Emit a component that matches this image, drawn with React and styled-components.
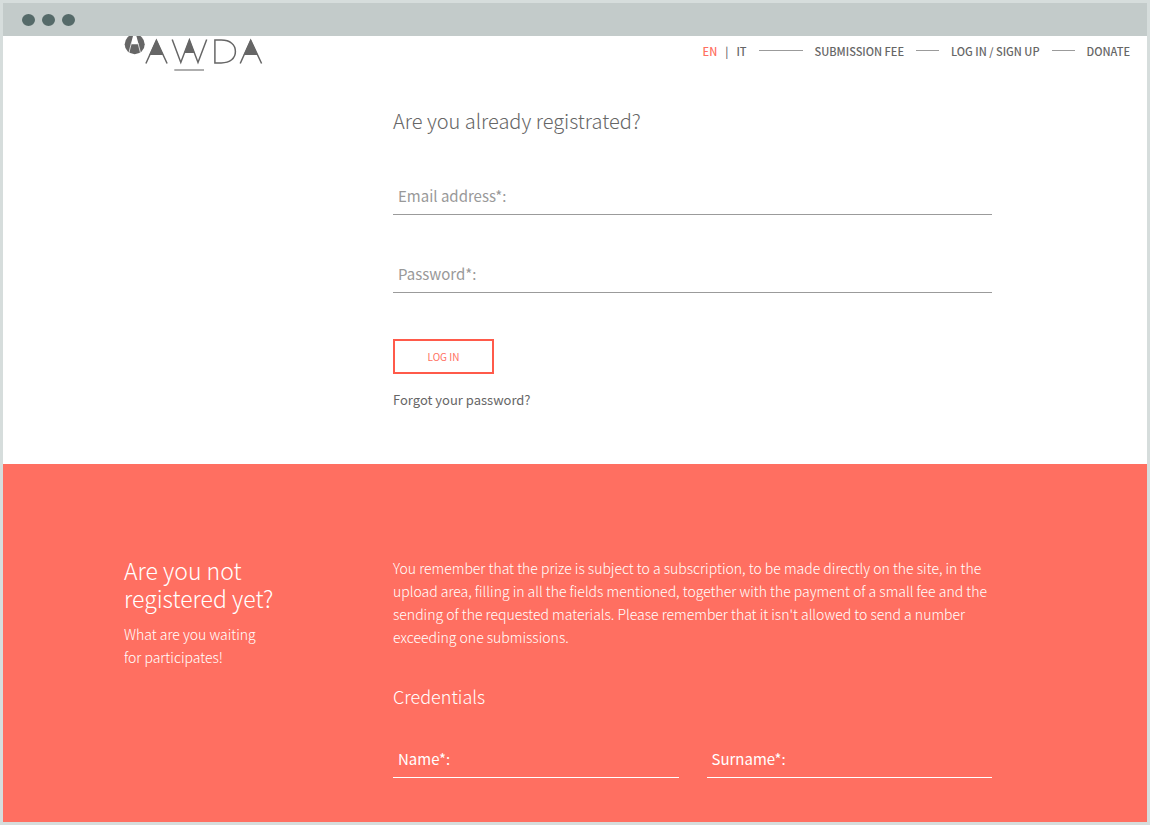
import styled, { createGlobalStyle } from "styled-components";

const Colors = {
    frame: "#d6dddc",
    toolbar: "#c3cbca",
    dot: "#556a69",
    coral: "#ff6f61",
    button: "#ff5a4a",
    text: "#666666",
    muted: "#999999",
    line: "#9b9b9b",
};

const App = () => {

    return (
        <>
            <GlobalStyle />
            <StyledWindow>
                <StyledToolbar>
                    <StyledDot />
                    <StyledDot />
                    <StyledDot />
                </StyledToolbar>
                <StyledHeader>
                    <Logo />
                    <StyledNav>
                        <StyledNavLink href="#en" $active>EN</StyledNavLink>
                        <StyledSeparator>|</StyledSeparator>
                        <StyledNavLink href="#it">IT</StyledNavLink>
                        <StyledDash $long />
                        <StyledNavLink href="#fee">SUBMISSION FEE</StyledNavLink>
                        <StyledDash />
                        <StyledNavLink href="#login">LOG IN / SIGN UP</StyledNavLink>
                        <StyledDash />
                        <StyledNavLink href="#donate">DONATE</StyledNavLink>
                    </StyledNav>
                </StyledHeader>
                <StyledLogin>
                    <StyledForm>
                        <StyledTitle>Are you already registrated?</StyledTitle>
                        <Field id="email" label="Email address*:" type="email" />
                        <Field id="password" label="Password*:" type="password" />
                        <StyledButton type="button">LOG IN</StyledButton>
                        <StyledForgot href="#forgot">Forgot your password?</StyledForgot>
                    </StyledForm>
                </StyledLogin>
                <StyledRegister>
                    <div>
                        <StyledRegisterTitle>Are you not<br />registered yet?</StyledRegisterTitle>
                        <StyledText>What are you waiting<br />for participates!</StyledText>
                    </div>
                    <div>
                        <StyledText>
                            You remember that the prize is subject to a subscription, to be made directly on the site, in the
                            upload area, filling in all the fields mentioned, together with the payment of a small fee and the
                            sending of the requested materials. Please remember that it isn't allowed to send a number
                            exceeding one submissions.
                        </StyledText>
                        <StyledSubtitle>Credentials</StyledSubtitle>
                        <StyledFieldRow>
                            <Field id="name" label="Name*:" type="text" light />
                            <Field id="surname" label="Surname*:" type="text" light />
                        </StyledFieldRow>
                    </div>
                </StyledRegister>
            </StyledWindow>
        </>
    )
}

export default App;

const Field = ({ id, label, type, light }) => (
    <StyledField $light={light}>
        <StyledLabel htmlFor={id} $light={light}>{label}</StyledLabel>
        <StyledInput id={id} type={type} />
    </StyledField>
)

const Logo = () => (
    <svg width="140" height="36" viewBox="124 36 140 36" role="img" aria-label="AWDA">
        <circle cx="134.7" cy="44.3" r="10" fill="#666" />
        <path d="M133 36h3.4l2.2 8.2h-7.8z" fill="#fff" />
        <path d="M131.4 43l-2.5 9.8M138 43l2.5 9.8" stroke="#ddd" strokeWidth="1" fill="none" />
        <g fill="none" stroke="#666" strokeWidth="1.5">
            <path d="M145.9 63.5l10.5-23.3 10.7 23.3" />
            <path d="M172.2 39.4l8.6 23 8.6-22.6 8.6 22.6 8.7-23" />
            <path d="M214.9 40.1h6.3c9 0 14.2 4.6 14.2 11.4s-5.2 11.4-14.2 11.4h-6.3z" />
            <path d="M240.2 63.5l10.5-23.3 10.9 23.3" />
        </g>
        <path d="M156.4 39.2l7 15.8h-14.1zM189.4 39l5.3 14h-10.6zM250.7 39.2l7.1 15.8h-14.2z" fill="#666" />
        <path d="M174.3 70h29.7" stroke="#777" strokeWidth="1.2" />
    </svg>
)

const GlobalStyle = createGlobalStyle`
    * {
        box-sizing: border-box;
    }

    body {
        margin: 0;
        background: #ffffff;
        color: ${Colors.text};
        font-family: "Noto Sans CJK SC", "Open Sans", sans-serif;
    }
`

const StyledWindow = styled.div`
    display: flex;
    flex-direction: column;
    min-height: 100vh;
    border: 3px solid ${Colors.frame};
`

const StyledToolbar = styled.div`
    display: flex;
    align-items: center;
    gap: 7px;
    height: 33px;
    padding: 0 19px;
    background: ${Colors.toolbar};
`

const StyledDot = styled.span`
    width: 13px;
    height: 12px;
    border-radius: 50%;
    background: ${Colors.dot};
`

const StyledHeader = styled.header`
    display: flex;
    align-items: flex-start;
    justify-content: space-between;
    padding: 0 17px 0 121px;
`

const StyledNav = styled.nav`
    display: flex;
    align-items: center;
    height: 29px;
    font-size: 11px;
    font-weight: 500;
    white-space: nowrap;
`

const StyledNavLink = styled.a`
    color: ${props => props.$active ? Colors.coral : Colors.text};
    text-decoration: none;
`

const StyledSeparator = styled.span`
    margin: 0 8px;
`

const StyledDash = styled.span`
    width: ${props => props.$long ? "44px" : "23px"};
    height: 1px;
    margin: 0 12px;
    background: ${Colors.line};
`

const StyledLogin = styled.section`
    padding: 33px 155px 52px 390px;
`

const StyledForm = styled.form`
    display: flex;
    flex-direction: column;
    align-items: flex-start;
`

const StyledTitle = styled.h1`
    margin: 0 0 38px;
    font-size: 20px;
    font-weight: 300;
    line-height: 32px;
`

const StyledField = styled.div`
    display: flex;
    align-items: center;
    width: 100%;
    height: 40px;
    margin-bottom: 38px;
    padding: 2px 5px 0;
    border-bottom: 1px solid ${props => props.$light ? "#ffffff" : Colors.line};
`

const StyledLabel = styled.label`
    color: ${props => props.$light ? "#ffffff" : Colors.muted};
    font-size: 15px;
    line-height: 24px;
`

const StyledInput = styled.input`
    flex: 1;
    min-width: 0;
    padding: 0 5px;
    border: 0;
    outline: 0;
    background: transparent;
    color: inherit;
    font: inherit;
`

const StyledButton = styled.button`
    width: 101px;
    height: 35px;
    margin: 8px 0 14px;
    border: 2px solid ${Colors.button};
    background: transparent;
    color: ${Colors.coral};
    font-family: inherit;
    font-size: 10px;
`

const StyledForgot = styled.a`
    color: ${Colors.text};
    font-size: 13px;
    line-height: 24px;
    text-decoration: none;
`

const StyledRegister = styled.section`
    display: grid;
    grid-template-columns: 269px 1fr;
    flex: 1;
    padding: 92px 155px 44px 121px;
    background: ${Colors.coral};
    color: #ffffff;
`

const StyledRegisterTitle = styled.h2`
    margin: 0 0 10px;
    font-size: 23px;
    font-weight: 300;
    line-height: 28px;
`

const StyledText = styled.p`
    margin: 0;
    padding-top: 1px;
    font-size: 14px;
    font-weight: 300;
    line-height: 23px;
`

const StyledSubtitle = styled.h3`
    margin: 33px 0 28px;
    font-size: 18px;
    font-weight: 300;
    line-height: 28px;
`

const StyledFieldRow = styled.div`
    display: grid;
    grid-template-columns: 1fr 1fr;
    gap: 28px;

    ${StyledField} {
        margin-bottom: 0;
    }
`
